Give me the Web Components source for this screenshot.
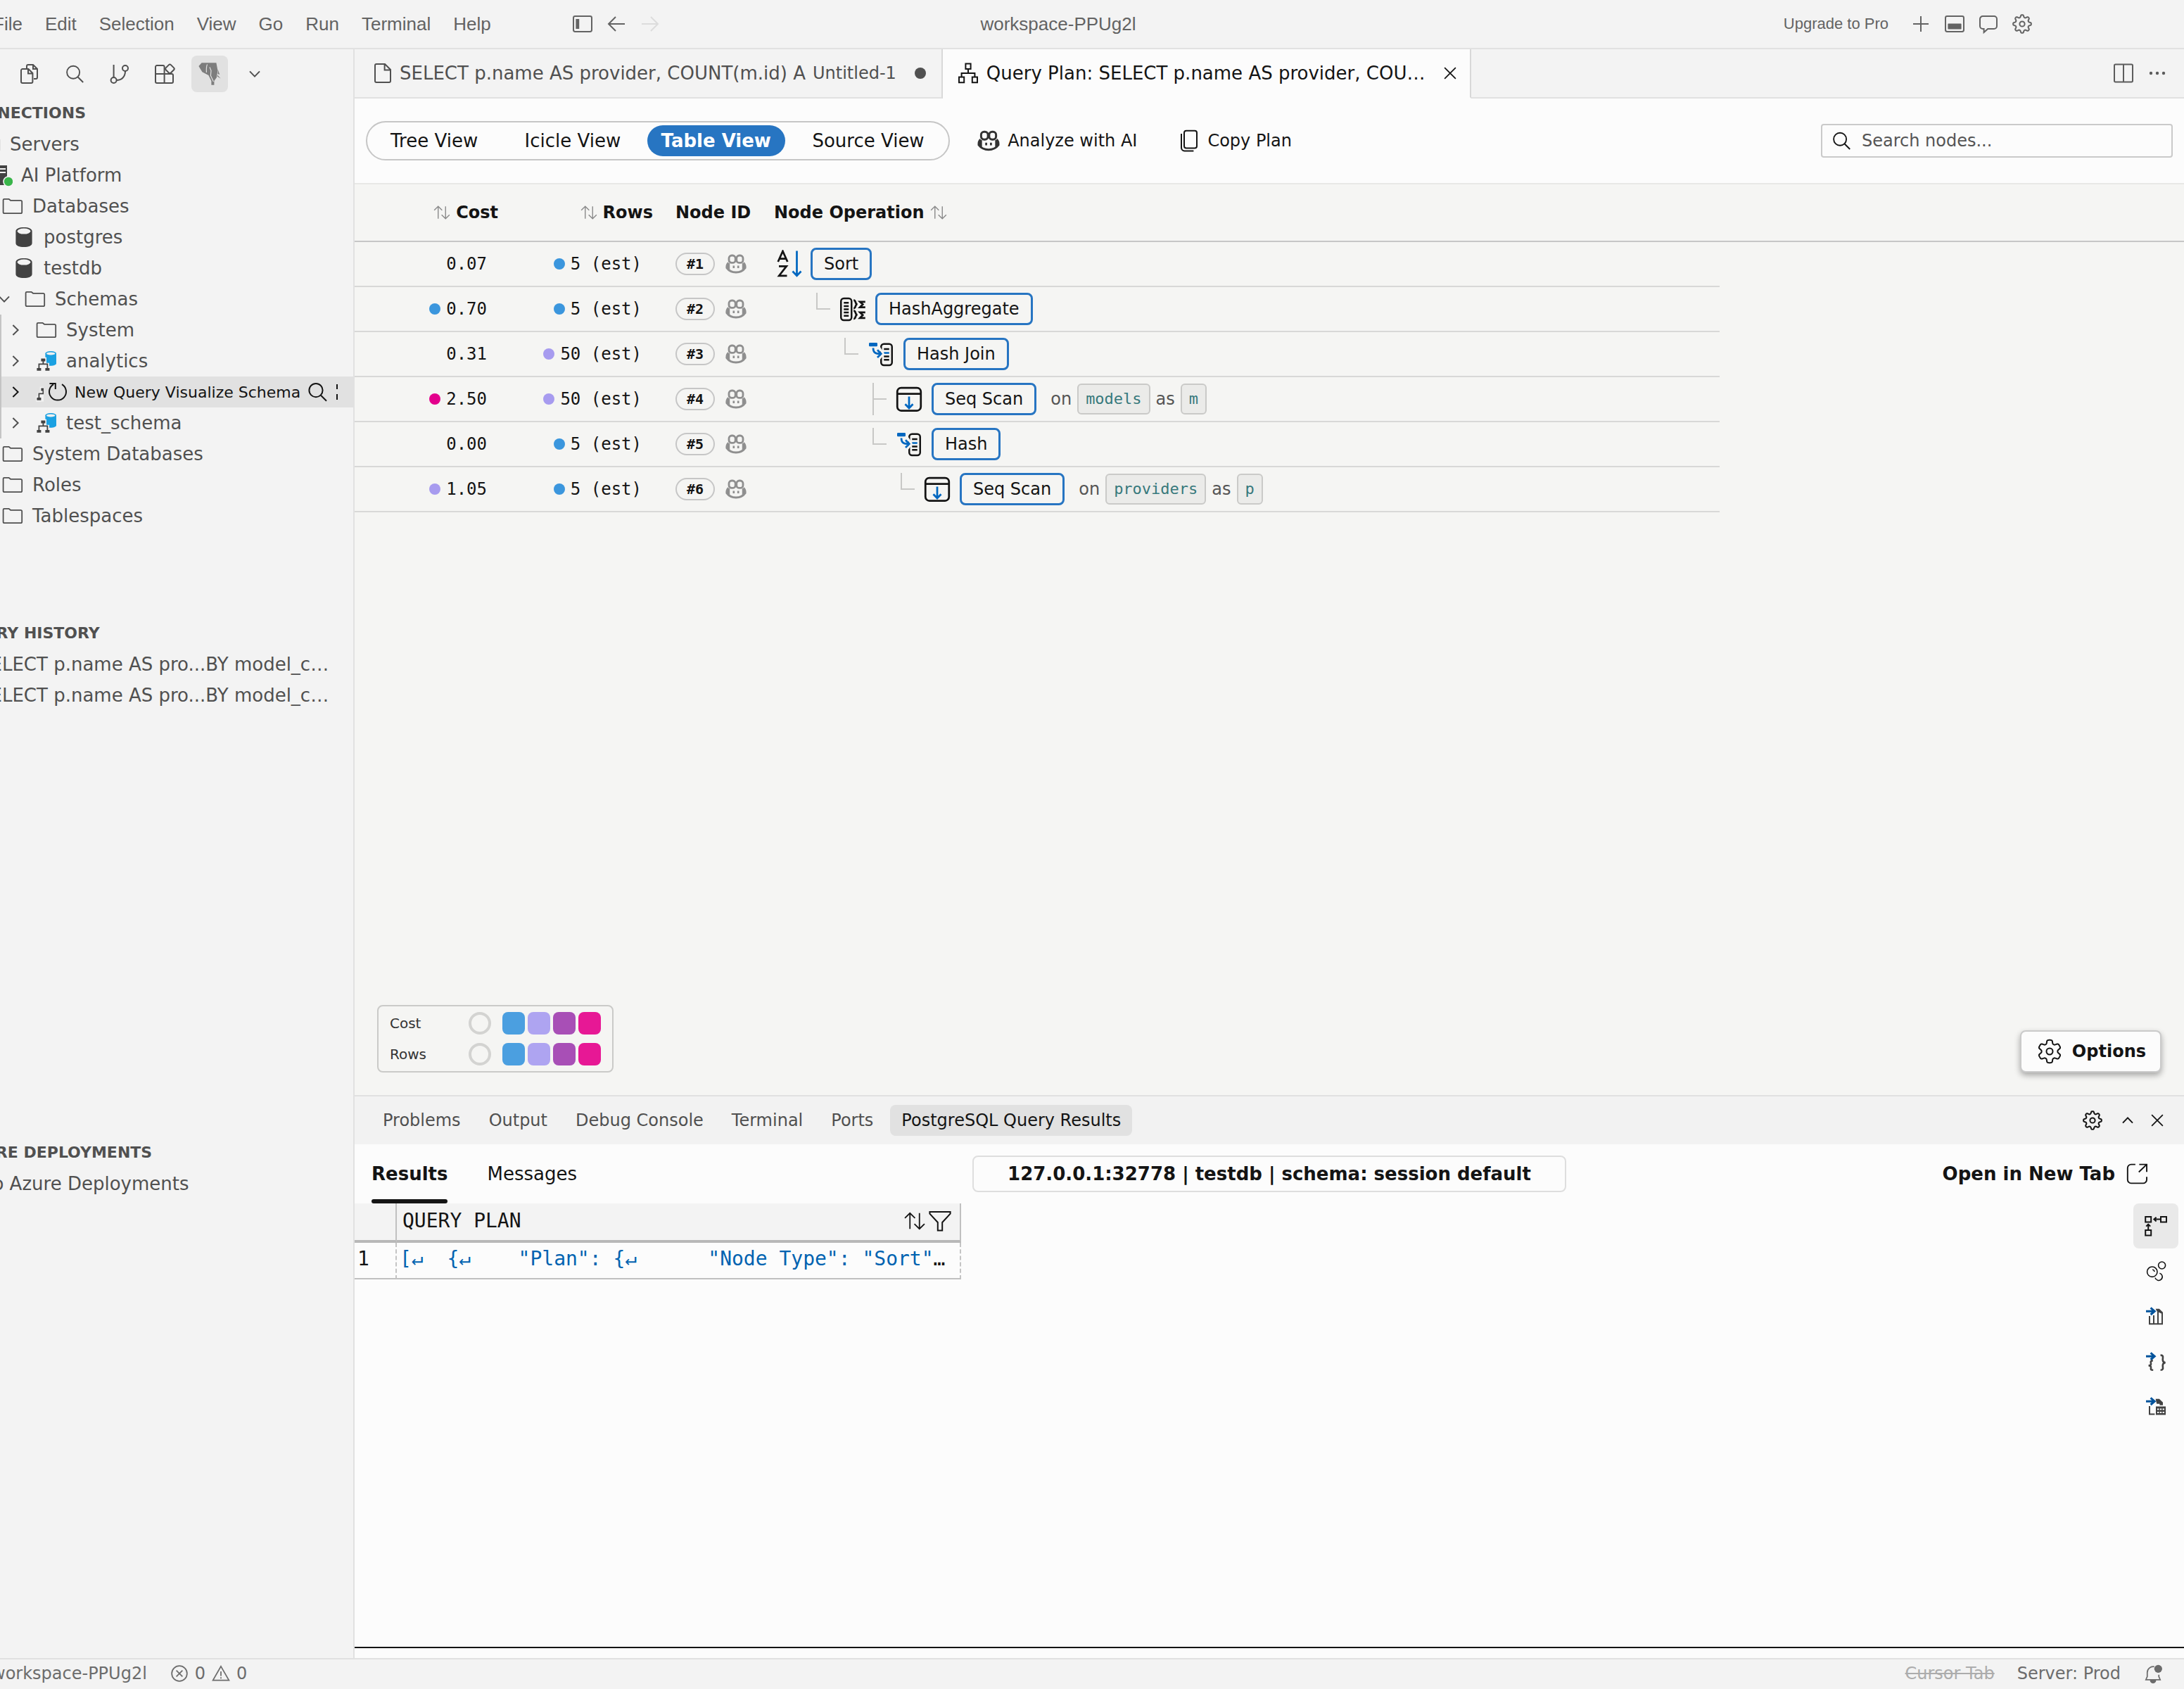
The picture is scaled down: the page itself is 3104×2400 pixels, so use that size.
<!DOCTYPE html>
<html lang="en">
<head>
<meta charset="utf-8">
<title>workspace-PPUg2l</title>
<style>
  :root {
    --text: #141414;
    --text-soft: #505050;
    --text-title: #636363;
    --chrome: #f3f3f3;
    --editor: #fcfcfc;
    --canvas: #f5f5f3;
    --line: #e1e1e1;
    --line-strong: #c6c6c6;
    --hover: #e1e1e1;
    --accent: #2775c2;
    --mono: "DejaVu Sans Mono", monospace;
  }
  body {
    margin: 0;
    font-family: "DejaVu Sans", sans-serif;
    font-size: 26px;
    color: var(--text);
    background: var(--chrome);
  }
</style>
</head>
<body>
<query-workbench></query-workbench>

<script>
/** Outline of a cog with n teeth, centred in the 16 unit icon grid. */
function gearPath(n, radius, depth, sharpness, bias) {
  const points = [];
  for (let i = 0; i < 120; i++) {
    const angle = (i / 120) * Math.PI * 2;
    const r = radius + depth * Math.tanh(sharpness * Math.cos(n * (angle - Math.PI / 2)) + bias);
    points.push((8 + r * Math.cos(angle)).toFixed(2) + ' ' + (8 + r * Math.sin(angle)).toFixed(2));
  }
  return 'M' + points.join('L') + 'Z';
}

const ARROW_IN = '<path d="M1 4.6h5.8M4.3 2.2 7.100 4.600 4.300 7" stroke="#00539c" stroke-width="1.5"/>';

// Every icon sits on a 16 x 16 grid and is stroked in the current colour.
const ICONS = {
  'layout-left': '<rect x="1.5" y="2.5" width="13" height="11" rx="1.2"/><path d="M4.4 4.5v7" stroke-width="2.4"/>',
  'arrow-left': '<path d="M14 8H2.5M7.5 3 2.5 8l5 5"/>',
  'arrow-right': '<path d="M2 8h11.5M8.5 3l5 5-5 5"/>',
  'add': '<path d="M8 2.5v11M2.5 8h11"/>',
  'layout-panel': '<rect x="1.5" y="2.5" width="13" height="11" rx="1.2"/><rect x="3.2" y="7.8" width="9.6" height="4" rx=".4" fill="currentColor" stroke="none"/>',
  'comment': '<path d="M4 2.5h8a2 2 0 0 1 2 2v5a2 2 0 0 1-2 2H7.600L4.800 14v-2.500H4a2 2 0 0 1-2-2v-5a2 2 0 0 1 2-2Z"/>',
  'gear': `<path d="${gearPath(8, 5.6, 0.9, 1.6, 0)}"/><circle cx="8" cy="8" r="1.8"/>`,
  'settings': `<path d="${gearPath(6, 6.1, 1.1, 2.2, 0.5)}" stroke-width=".9"/><circle cx="8" cy="8" r="2" stroke-width=".9"/>`,
  'files': '<path d="M6 4V2.500a1 1 0 0 1 1-1h3.500l3 3v6a1 1 0 0 1-1 1H11M10.500 1.500v3h3"/><path d="M3 4.500h4.200l3 3V13.500a1 1 0 0 1-1 1H3a1 1 0 0 1-1-1v-8a1 1 0 0 1 1-1ZM7 4.500v3.200h3.200"/>',
  'search': '<circle cx="7" cy="6.8" r="4.8"/><path d="m10.500 10.400 4 4"/>',
  'branch': '<circle cx="3.800" cy="12.500" r="2"/><circle cx="12" cy="4" r="2"/><path d="M3.800 10.500V1.500M12 6c0 4-2.500 6.500-6.200 6.500"/>',
  'extensions': '<path d="M7.800 8V3a1 1 0 0 0-1-1H2.500a1 1 0 0 0-1 1v10.500a1 1 0 0 0 1 1H13a1 1 0 0 0 1-1V9a1 1 0 0 0-1-1H1.500M7.800 8v6.500"/><rect x="9.200" y="1.900" width="5" height="5" rx="1" transform="rotate(45 11.700 4.400)"/>',
  'chevron-down': '<path d="M4.500 6.200 8 9.800l3.500-3.600"/>',
  'chevron-right': '<path d="M6.200 4.500 9.800 8l-3.600 3.500"/>',
  'chevron-up': '<path d="M4.500 9.800 8 6.200l3.500 3.600"/>',
  'close': '<path d="m3.500 3.500 9 9M12.500 3.500l-9 9"/>',
  'elephant': '<g stroke="none" fill="#7d7d7d"><path d="M2.300.1h10.400L13.700 5.500 13 10.500 11.200 13v2.900H9.200V13L7.200 9 2.700 6.600.2 2.500Z"/><path d="M13.900 5l1.200 3.500-1.300-.5ZM13.500 8.800l2.300 2.400-2.300-1.300Z"/></g><path d="M6.300 1.200C5.400 3 5.700 5 5.700 7M8 3.200l1 2.500-.3 3.500 2 4.300" stroke="#e1e1e1" stroke-width=".6"/>',
  'file': '<path d="M3.500 1.500h6l4 4v8a1 1 0 0 1-1 1h-9a1 1 0 0 1-1-1v-11a1 1 0 0 1 1-1ZM9.300 1.500v4.200h4.200"/>',
  'dot': '<circle cx="8" cy="8" r="4" fill="currentColor" stroke="none"/>',
  'plan': '<path d="M6.200 1.200h3.600v3.800H6.200ZM1.500 10.800h3.600v3.800H1.500ZM10.900 10.800h3.600v3.800h-3.600ZM8 5v3M3.300 10.800V8h9.400v2.800"/>',
  'split': '<rect x="1.500" y="1.800" width="13" height="12.400" rx=".8"/><path d="M8 2v12"/>',
  'more': '<g fill="currentColor" stroke="none"><circle cx="3.500" cy="8" r="1.100"/><circle cx="8" cy="8" r="1.100"/><circle cx="12.500" cy="8" r="1.100"/></g>',
  'folder': '<path d="M2 2.900h3.300l1.200 1h7.200a.9.900 0 0 1 .9.900v7.400a.9.900 0 0 1-.9.900H2.200a.9.900 0 0 1-.9-.9V3.600a.7.700 0 0 1 .7-.7Z" stroke-width=".9"/>',
  'server': '<path d="M3 1h9v14H3Z" fill="#424242" stroke="none"/><path d="M5 3.500h6M5 6h6" stroke="#f3f3f3"/><circle cx="13" cy="12.500" r="3.500" fill="#39b54a" stroke="#f3f3f3" stroke-width=".8"/>',
  'database': '<path d="M2.200 3.800C2.200 2 4.700 1 8 1s5.800 1 5.800 2.800v8.400C13.800 14 11.300 15 8 15s-5.800-1-5.800-2.800Z" fill="#424242" stroke="none"/><ellipse cx="8" cy="3.800" rx="4.700" ry="2" fill="#f3f3f3" stroke="none"/>',
  'schema': '<path d="M7.200 2.600C7.200 1.700 9 1 11.100 1s3.900.7 3.900 1.600v7.200c0 .9-1.800 1.600-3.900 1.600h-3.900Z" fill="#1ba1e2" stroke="none"/><ellipse cx="11.100" cy="2.700" rx="3.100" ry="1" fill="#f0f0f0" stroke="none"/><path d="M.5 12.200h1.200V9.400H3.400V5.400h4.600v4H10v2.800h1v3.500H.5Z" fill="#f3f3f3" stroke="none"/><g fill="#424242" stroke="none"><path d="M4.200 6.200h3v2H4.200ZM1.200 13h3v1.900h-3ZM7.200 13h3v1.900h-3Z"/></g><path d="M5.700 8v2M2.700 13v-2.800h6V13" stroke="#424242" stroke-width=".9"/>',
  'refresh': '<path d="M11 2.600a6 6 0 1 1-6 0M2.200 2h4.200v4"/>',
  'pipe-clip': '<path d="M8 2.500v3.500M8 9.500v4"/>',
  'copilot': '<rect x="3" y="2" width="4.600" height="5.200" rx="2" stroke-width="1.400"/><rect x="8.400" y="2" width="4.600" height="5.200" rx="2" stroke-width="1.400"/><path d="M2.700 7.200C1.600 8 1.300 9 1.400 10.800 3 13 5.500 14 8 14s5-1 6.600-3.200c.1-1.800-.2-2.800-1.300-3.600" stroke-width="1.400"/><path d="M2.300 7.500h1.300v4.600L1.200 11ZM13.700 7.500h-1.300v4.600l2.400-1.100Z" fill="currentColor" stroke="none"/><path d="M6.400 9.300v1.700M9.600 9.300v1.700" stroke-width="1.300"/>',
  'copy': '<rect x="4.500" y=".9" width="9" height="12.400" rx="1.500"/><path d="M2.500 3v10a2.200 2.200 0 0 0 2.200 2.200h6.500"/>',
  'sort': '<path d="M5 13V3M1.800 6.200 5 3l3.200 3.200M11 3v10M7.800 9.800 11 13l3.200-3.200" stroke-width=".8"/>',
  'filter': '<path d="M.7 1.500h14.600v1.300L9.600 9v5.800H6.400V9L.7 2.800Z"/>',
  'op-sort': '<path d="m2.300 6.800 2.700-6 2.700 6M3.200 5h3.600M2.800 9.300h4.300L2.900 14.700h4.500" stroke-width="1.100"/><path d="M13 .6v14M10.600 12.200l2.400 2.500 2.400-2.500" stroke="#0067c0" stroke-width="1.100"/>',
  'op-aggregate': '<rect x="1.300" y="2" width="6" height="12.400" rx="1.600"/><path d="M2.900 4.500h2.800M2.900 6.400h2.800M2.900 8.200h2.800M2.900 10h2.800M2.900 11.900h2.800"/><path d="M8.500 3c1.600 0 .5 2.100 2.100 2.300-1.600.2-.5 2.300-2.100 2.300M8.500 9c1.600 0 .5 2.100 2.100 2.300-1.600.2-.5 2.300-2.100 2.300M15.100 3.900h-3l1.600 1.500-1.600 1.600h3M15.100 9.900h-3l1.600 1.600-1.600 1.600h3" stroke-width="1.100"/>',
  'op-hash': '<rect x="8.100" y="2.300" width="6.200" height="12.100" rx="1.600"/><path d="M9.700 5.200h3M9.700 9.400h3M9.700 11.300h3"/><path d="M9.700 7.400h3" stroke="#0067c0"/><rect x="1.200" y="1.600" width="4.800" height="2.100" rx=".5" fill="#0067c0" stroke="none"/><path d="M7 4.200l2.200 3.600L7 11" stroke="#f5f5f3" stroke-width="1.200"/><path d="M3.600 4.600c0 2.400 1 3.300 4.200 3.300M6 5.700l2.100 2.200L6 10" stroke="#0067c0" stroke-width="1.100"/>',
  'op-scan': '<rect x="1.300" y="1.600" width="13.400" height="13" rx="2.200" stroke-width="1.100"/><path d="M1.300 5h13.400" stroke-width="1.100"/><path d="M8 6.600v6.600M5.800 10.900 8 13.200l2.200-2.300" stroke="#0067c0" stroke-width="1.100"/>',
  'open-new': '<path d="M7 1.700H4.200a2.400 2.400 0 0 0-2.400 2.400v7.800a2.400 2.400 0 0 0 2.400 2.400h8a2.400 2.400 0 0 0 2.400-2.400V10M9.600 1.700h5v5M14.600 1.700 9.300 6.800" stroke-width=".9"/>',
  'diagram': '<path d="M.6 1.500h4v3.700h-4ZM11.500 1.500h4v3.700h-4ZM.6 11h4v3.700h-4Z"/><path d="M11 3.300H6.600M8.300 1.900 6.700 3.300l1.600 1.400M2.600 10.500V7M1.100 8.300 2.600 6.800l1.500 1.500"/>',
  'bubbles': '<circle cx="5.400" cy="8.600" r="3.600" stroke-width=".8"/><circle cx="12.300" cy="4" r="2.500" stroke-width=".8"/><path d="M5.600 7a2 2 0 0 1 1.500 1.500M10.700 9.600a2.600 2.600 0 1 1-3.200 3.200" stroke-width=".8"/>',
  'export-csv': ARROW_IN + '<path d="M3.500 8v5.600h9V6M6.500 7.500v6M9.500 5v8.500" stroke="#424242"/><path d="M7.800 2.900h2.600l2.600 2.500v1.400L8.800 4.800Z" fill="#424242" stroke="none"/>',
  'export-json': ARROW_IN + '<path d="M5.900 7.700c-2.400 0-1.200 1.500-1.400 2.600-.1.700-.6.900-1.700.9 1.100 0 1.600.3 1.700 1 .2 1.200-.9 2.200 1.600 2.200M11.300 3.800c2.500 0 1.500 1.800 1.600 3.500.1 1.100.6 1.700 1.900 1.800-1.300.1-1.800.7-1.900 1.800-.1 1.700.9 3.500-1.600 3.500" stroke="#424242" stroke-width="1.300"/>',
  'export-xlsx': ARROW_IN + '<path d="M3.500 8v5.700h3.700" stroke="#424242"/><path d="M7.800 2.900h2.600l2.600 2.500v2h-2.300V6.400H8.600ZM8 8.200h7v6H8Z" fill="#424242" stroke="none"/><path d="M9 10.300h5M9 12.500h5" stroke="#fcfcfc" stroke-dasharray="1.200 .7"/>',
  'error': '<circle cx="8" cy="8" r="6.200"/><path d="m5.500 5.500 5 5M10.500 5.500l-5 5"/>',
  'warning': '<path d="M8 2.200 14.500 13.500h-13ZM8 6.300v3.700M8 11v1.200"/>',
  'bell': '<path d="M9 2.500a4.800 4.800 0 0 0-5.700 4.600v3.400L2.200 13h11.600l-1.100-2.500V9"/><circle cx="12.200" cy="4.200" r="3.200" fill="currentColor" stroke="none"/><path d="M6 13.500a2 2 0 0 0 4 0Z" fill="currentColor"/>',
};

/** Base class: renders the element's template into an open shadow root. */
class UiElement extends HTMLElement {
  connectedCallback() {
    if (!this.shadowRoot) {
      this.attachShadow({ mode: 'open' });
    }
    this.shadowRoot.innerHTML = this.template();
  }
}

class UiIcon extends UiElement {
  template() {
    const size = this.getAttribute('size') || 32;
    return `
      <style>
        :host { display: inline-flex; flex: none; }
        svg { display: block; }
      </style>
      <svg width="${size}" height="${size}" viewBox="0 0 16 16" fill="none" stroke="currentColor" aria-hidden="true">${ICONS[this.getAttribute('name')]}</svg>`;
  }
}
customElements.define('ui-icon', UiIcon);

/** Square button that only holds an icon. */
class IconButton extends UiElement {
  template() {
    const size = this.getAttribute('size') || 32;
    return `
      <style>
        :host { display: inline-flex; flex: none; }
        button {
          display: flex; align-items: center; justify-content: center;
          width: var(--box, 32px); height: var(--box, 32px);
          padding: 0; border: 0; border-radius: 8px;
          background: var(--button-background, transparent); color: inherit;
        }
      </style>
      <button aria-label="${this.getAttribute('label')}"><ui-icon name="${this.getAttribute('name')}" size="${size}"></ui-icon></button>`;
  }
}
customElements.define('icon-button', IconButton);

class TitleBar extends UiElement {
  template() {
    const menus = ['File', 'Edit', 'Selection', 'View', 'Go', 'Run', 'Terminal', 'Help'];
    return `
      <style>
        :host {
          display: grid; grid-template-columns: 1fr auto 1fr; align-items: center;
          height: 68px; padding-right: 96px; border-bottom: 2px solid var(--line);
          font-family: "Liberation Sans", sans-serif; color: var(--text-title);
        }
        nav, .history, .actions { display: flex; align-items: center; }
        nav { margin-left: -26px; }
        nav button { padding: 0 16px; border: 0; background: none; font: inherit; color: inherit; }
        .left { display: flex; align-items: center; gap: 98px; }
        .history { gap: 16px; }
        .disabled { color: #dcdcdc; }
        h1 { margin: 0; font-size: 26px; font-weight: 400; }
        .actions { justify-content: flex-end; gap: 16px; padding-right: 118px; }
        .actions a { margin-right: 14px; font-size: 22px; color: inherit; text-decoration: none; }
      </style>
      <div class="left">
        <nav>${menus.map(menu => `<button>${menu}</button>`).join('')}</nav>
        <div class="history">
          <icon-button name="layout-left" label="Toggle sidebar"></icon-button>
          <icon-button name="arrow-left" label="Back"></icon-button>
          <icon-button class="disabled" name="arrow-right" label="Forward"></icon-button>
        </div>
      </div>
      <h1>workspace-PPUg2l</h1>
      <div class="actions">
        <a href="#upgrade">Upgrade to Pro</a>
        <icon-button name="add" label="New"></icon-button>
        <icon-button name="layout-panel" label="Toggle panel"></icon-button>
        <icon-button name="comment" label="Chat"></icon-button>
        <icon-button name="gear" label="Settings"></icon-button>
      </div>`;
  }
}
customElements.define('title-bar', TitleBar);

class TreeItem extends UiElement {
  template() {
    const twist = this.getAttribute('twist');
    const icon = this.getAttribute('icon');
    const depth = Number(this.getAttribute('depth') || 0);
    return `
      <style>
        :host { display: flex; align-items: center; gap: 12px; height: 44px; padding-left: ${depth * 16}px; white-space: nowrap; }
        .twist { display: inline-flex; width: 32px; height: 32px; }
      </style>
      <span class="twist">${twist ? `<ui-icon name="chevron-${twist}"></ui-icon>` : ''}</span>
      ${icon ? `<ui-icon name="${icon}"></ui-icon>` : ''}
      <slot></slot>`;
  }
}
customElements.define('tree-item', TreeItem);

/** Schema row under the pointer: its label gives way to the inline actions. */
class TreeItemActions extends UiElement {
  template() {
    return `
      <style>
        :host { display: flex; align-items: center; height: 44px; padding-left: 4px; background: var(--hover); color: var(--text); font-size: 22px; white-space: nowrap; }
        .clip { width: 12px; margin-left: 12px; overflow: hidden; }
        .actions { display: flex; align-items: center; margin-left: 4px; }
        a { color: inherit; text-decoration: none; }
        .links { display: flex; gap: 7px; margin: 0 8px; }
        .overflow { display: flex; justify-content: center; width: 24px; overflow: hidden; }
      </style>
      <ui-icon name="chevron-right"></ui-icon>
      <span class="clip"><ui-icon name="schema"></ui-icon></span>
      <span class="actions">
        <icon-button name="refresh" label="Refresh"></icon-button>
        <span class="links"><a href="#query">New Query</a><a href="#visualize">Visualize Schema</a></span>
        <icon-button name="search" label="Search"></icon-button>
        <span class="overflow"><ui-icon name="pipe-clip"></ui-icon></span>
      </span>`;
  }
}
customElements.define('tree-item-actions', TreeItemActions);

class SideBar extends UiElement {
  template() {
    return `
      <style>
        :host { display: flex; flex-direction: column; min-width: 0; overflow: hidden; border-right: 2px solid var(--line); color: var(--text-soft); }
        .views { display: flex; align-items: center; gap: 12px; height: 70px; padding-left: 16px; --box: 52px; }
        .active { --button-background: var(--hover); }
        section { flex: 1 1 0; min-height: 0; }
        h2 { margin: 0 0 1px -57px; font-size: 22px; line-height: 42px; white-space: nowrap; }
        .tree { margin-left: -74px; }
        .children { margin-left: 74px; border-left: 2px solid #c4c4c4; }
        .children tree-item { margin-left: 4px; }
      </style>
      <div class="views">
        <icon-button name="files" label="Explorer"></icon-button>
        <icon-button name="search" size="30" label="Search"></icon-button>
        <icon-button name="branch" label="Source control"></icon-button>
        <icon-button name="extensions" label="Extensions"></icon-button>
        <icon-button class="active" name="elephant" label="PostgreSQL"></icon-button>
        <icon-button name="chevron-down" label="More views"></icon-button>
      </div>
      <section>
        <h2>CONNECTIONS</h2>
        <div class="tree">
          <tree-item depth="0" icon="folder">Servers</tree-item>
          <tree-item depth="1" icon="server">AI Platform</tree-item>
          <tree-item depth="2" icon="folder">Databases</tree-item>
          <tree-item depth="3" icon="database">postgres</tree-item>
          <tree-item depth="3" icon="database">testdb</tree-item>
          <tree-item depth="4" icon="folder" twist="down">Schemas</tree-item>
          <div class="children">
            <tree-item icon="folder" twist="right">System</tree-item>
            <tree-item icon="schema" twist="right">analytics</tree-item>
            <tree-item-actions></tree-item-actions>
            <tree-item icon="schema" twist="right">test_schema</tree-item>
          </div>
          <tree-item depth="2" icon="folder">System Databases</tree-item>
          <tree-item depth="2" icon="folder">Roles</tree-item>
          <tree-item depth="2" icon="folder">Tablespaces</tree-item>
        </div>
      </section>
      <section>
        <h2>QUERY HISTORY</h2>
        <div class="tree">
          <tree-item>SELECT p.name AS pro...BY model_c…</tree-item>
          <tree-item>SELECT p.name AS pro...BY model_c…</tree-item>
        </div>
      </section>
      <section>
        <h2>AZURE DEPLOYMENTS</h2>
        <div class="tree"><tree-item>No Azure Deployments</tree-item></div>
      </section>`;
  }
}
customElements.define('side-bar', SideBar);

class EditorTabs extends UiElement {
  template() {
    return `
      <style>
        :host { display: flex; height: 70px; white-space: nowrap; }
        .tab { display: flex; align-items: center; padding: 0 14px 0 24px; border-right: 2px solid #d8d8d8; color: var(--text-soft); }
        .tab, .rest { border-bottom: 2px solid var(--line); box-sizing: border-box; }
        .tab button { padding: 0; border: 0; background: none; font: inherit; color: inherit; }
        .tab ui-icon { margin-right: 8px; }
        .tab small { margin: 0 18px 0 10px; font-size: 24px; }
        .active { padding: 0 12px 0 20px; border-bottom-color: var(--editor); background: var(--editor); color: var(--text); }
        .active ui-icon { margin-right: 10px; }
        .active button { margin-right: 20px; }
        .rest { display: flex; flex: 1; align-items: center; justify-content: flex-end; gap: 16px; padding-right: 22px; color: #5c5c5c; }
      </style>
      <div class="tab">
        <ui-icon name="file"></ui-icon>
        <button>SELECT p.name AS provider, COUNT(m.id) A</button>
        <small>Untitled-1</small>
        <icon-button name="dot" label="Unsaved changes"></icon-button>
      </div>
      <div class="tab active">
        <ui-icon name="plan"></ui-icon>
        <button>Query Plan: SELECT p.name AS provider, COU…</button>
        <icon-button name="close" size="28" label="Close"></icon-button>
      </div>
      <div class="rest">
        <icon-button name="split" label="Split editor"></icon-button>
        <icon-button name="more" label="More actions"></icon-button>
      </div>`;
  }
}
customElements.define('editor-tabs', EditorTabs);

class PlanToolbar extends UiElement {
  template() {
    const views = ['Tree View', 'Icicle View', 'Table View', 'Source View'];
    return `
      <style>
        :host { display: flex; align-items: center; height: 120px; padding: 0 16px; border-bottom: 2px solid #e8e8e6; background: var(--editor); font-size: 24px; }
        .switch { display: flex; gap: 8px; padding: 4px; border: 2px solid var(--line-strong); border-radius: 28px; }
        .switch button { display: grid; height: 44px; align-content: center; justify-items: center; padding: 0 20px; border: 0; border-radius: 22px; background: none; color: var(--text); font: 26px/44px "DejaVu Sans", sans-serif; }
        /* keeps room for the bold label so that the switch never changes width */
        .switch button::after { content: attr(title); height: 0; font-weight: 700; visibility: hidden; overflow: hidden; }
        .switch .on { background: var(--accent); color: #fff; font-weight: 700; }
        .command { display: flex; align-items: center; gap: 10px; padding: 0; border: 0; background: none; color: var(--text); font: inherit; }
        .ai { margin: 0 58px 0 38px; }
        .ai ui-icon { color: #333; }
        label { display: flex; align-items: center; gap: 14px; box-sizing: border-box; width: 500px; height: 48px; margin-left: auto; padding: 0 12px; border: 2px solid #cacaca; border-radius: 4px; }
        input { flex: 1; min-width: 0; padding: 0; border: 0; outline: 0; background: none; font: inherit; }
        input::placeholder { color: #555; opacity: 1; }
      </style>
      <div class="switch">
        ${views.map(view => `<button title="${view}"${view === 'Table View' ? ' class="on"' : ''}>${view}</button>`).join('')}
      </div>
      <button class="command ai"><ui-icon name="copilot" size="34"></ui-icon>Analyze with AI</button>
      <button class="command"><ui-icon name="copy"></ui-icon>Copy Plan</button>
      <label><ui-icon name="search" size="30"></ui-icon><input type="text" placeholder="Search nodes..." aria-label="Search nodes"></label>`;
  }
}
customElements.define('plan-toolbar', PlanToolbar);

const PLAN = [
  { cost: '0.07', rows: '5', rowsDot: 'blue', op: 'Sort', icon: 'op-sort', depth: 0 },
  { cost: '0.70', costDot: 'blue', rows: '5', rowsDot: 'blue', op: 'HashAggregate', icon: 'op-aggregate', depth: 1 },
  { cost: '0.31', rows: '50', rowsDot: 'lilac', op: 'Hash Join', icon: 'op-hash', depth: 2 },
  { cost: '2.50', costDot: 'pink', rows: '50', rowsDot: 'lilac', op: 'Seq Scan', icon: 'op-scan', depth: 3, more: true, table: 'models', alias: 'm' },
  { cost: '0.00', rows: '5', rowsDot: 'blue', op: 'Hash', icon: 'op-hash', depth: 3 },
  { cost: '1.05', costDot: 'lilac', rows: '5', rowsDot: 'blue', op: 'Seq Scan', icon: 'op-scan', depth: 4, table: 'providers', alias: 'p' },
];

class PlanTable extends UiElement {
  dot(color) {
    return color ? `<i class="dot ${color}"></i>` : '';
  }

  branch(node) {
    if (node.depth === 0) {
      return '';
    }
    return `<span class="branch${node.more ? ' more' : ''}" style="margin-left: ${20 + node.depth * 40}px"></span>`;
  }

  row(node, index) {
    const target = node.table
      ? `<span class="target">on <code>${node.table}</code> as <code>${node.alias}</code></span>`
      : '';
    return `
      <tr>
        <td class="number"><div>${this.dot(node.costDot)}${node.cost}</div></td>
        <td class="number"><div>${this.dot(node.rowsDot)}${node.rows} (est)</div></td>
        <td><div class="id"><b>#${index + 1}</b><icon-button name="copilot" label="Analyze node ${index + 1} with AI"></icon-button></div></td>
        <td><div class="operation">${this.branch(node)}<ui-icon name="${node.icon}" size="40"></ui-icon><button>${node.op}</button>${target}</div></td>
      </tr>`;
  }

  template() {
    const sort = '<ui-icon name="sort" size="28"></ui-icon>';
    return `
      <style>
        :host { display: block; font-size: 24px; }
        table { width: 100%; border-collapse: separate; border-spacing: 0; table-layout: fixed; }
        th, td { box-sizing: border-box; padding: 0 16px; text-align: left; white-space: nowrap; }
        th { height: 82px; border-bottom: 2px solid var(--line-strong); }
        td { height: 64px; border-bottom: 2px solid #d8d8d7; }
        th div, td div { display: flex; align-items: center; gap: 8px; }
        th div { gap: 6px; }
        th.number div, td.number div { justify-content: flex-end; }
        th ui-icon { color: #8a8a8a; }
        td.number { padding-right: 32px; font-family: var(--mono); }
        .cost, .rows { width: 220px; }
        .node { width: 140px; }
        .spare { width: 660px; }
        .dot { width: 16px; height: 16px; border-radius: 50%; }
        .blue { background: #3b96dd; }
        .lilac { background: #a79bef; }
        .pink { background: #e3008c; }
        td .id { gap: 14px; color: #8f8f8f; }
        b { box-sizing: border-box; width: 56px; height: 32px; border: 2px solid var(--line-strong); border-radius: 16px; color: var(--text); font: 700 20px/28px var(--mono); text-align: center; }
        td .operation { gap: 12px; }
        .branch { align-self: flex-start; box-sizing: border-box; width: 20px; height: 24px; border: solid #c8c8c6; border-width: 0 0 2px 2px; }
        .more { position: relative; height: 46px; border-bottom: 0; }
        .more::after { content: ""; position: absolute; top: 22px; left: 0; width: 18px; height: 2px; background: #c8c8c6; }
        button { height: 46px; padding: 0 16px; border: 3px solid var(--accent); border-radius: 8px; background: none; color: var(--text); font: inherit; }
        .target { display: flex; align-items: center; gap: 8px; margin-left: 8px; color: #555; }
        code { padding: 0 10px; border: 2px solid #cacac8; border-radius: 6px; background: #ebebe9; color: #37797c; font: 22px/40px var(--mono); }
      </style>
      <table>
        <colgroup><col class="cost"><col class="rows"><col class="node"><col><col class="spare"></colgroup>
        <thead>
          <tr>
            <th class="number"><div>${sort}Cost</div></th>
            <th class="number"><div>${sort}Rows</div></th>
            <th>Node ID</th>
            <th colspan="2"><div>Node Operation${sort}</div></th>
          </tr>
        </thead>
        <tbody>${PLAN.map((node, index) => this.row(node, index)).join('')}</tbody>
      </table>`;
  }
}
customElements.define('plan-table', PlanTable);

class HeatLegend extends UiElement {
  template() {
    const swatches = '<i class="none"></i><i class="low"></i><i class="mid"></i><i class="high"></i><i class="top"></i>';
    return `
      <style>
        :host { display: grid; gap: 12px; padding: 8px 16px; border: 2px solid #cacac8; border-radius: 8px; font-size: 20px; color: #333; }
        div { display: flex; align-items: center; gap: 4px; }
        span { width: 108px; }
        i { box-sizing: border-box; width: 32px; height: 32px; border-radius: 8px; }
        .none { margin-right: 12px; border: 4px solid #d3d3d1; border-radius: 50%; }
        .low { background: #4b9fe0; }
        .mid { background: #aea4f1; }
        .high { background: #a84fb6; }
        .top { background: #e71895; }
      </style>
      <div><span>Cost</span>${swatches}</div>
      <div><span>Rows</span>${swatches}</div>`;
  }
}
customElements.define('heat-legend', HeatLegend);

class PlanEditor extends UiElement {
  template() {
    return `
      <style>
        :host { display: flex; flex-direction: column; min-height: 0; background: var(--canvas); }
        editor-tabs { background: var(--chrome); }
        footer { display: flex; align-items: flex-end; justify-content: space-between; margin-top: auto; padding: 32px; }
        button { display: flex; align-items: center; gap: 14px; height: 60px; padding: 0 20px 0 22px; border: 2px solid #cacaca; border-radius: 8px; background: var(--editor); color: var(--text); font: 700 24px "DejaVu Sans", sans-serif; box-shadow: 0 4px 8px rgba(0, 0, 0, .32); }
      </style>
      <editor-tabs></editor-tabs>
      <plan-toolbar></plan-toolbar>
      <plan-table></plan-table>
      <footer>
        <heat-legend></heat-legend>
        <button><ui-icon name="settings" size="36"></ui-icon>Options</button>
      </footer>`;
  }
}
customElements.define('plan-editor', PlanEditor);

class PanelTabs extends UiElement {
  template() {
    const tabs = ['Problems', 'Output', 'Debug Console', 'Terminal', 'Ports', 'PostgreSQL Query Results'];
    return `
      <style>
        :host { display: flex; align-items: center; justify-content: space-between; height: 68px; padding: 0 22px 0 24px; background: #f2f2f2; font-size: 24px; }
        nav, .actions { display: flex; align-items: center; gap: 8px; }
        .actions { gap: 10px; }
        .settings { margin-right: 8px; }
        nav button { height: 44px; padding: 0 16px; border: 0; border-radius: 8px; background: none; color: var(--text-soft); font: inherit; }
        nav .on { background: var(--hover); color: var(--text); }
      </style>
      <nav>${tabs.map((tab, index) => `<button${index === 5 ? ' class="on"' : ''}>${tab}</button>`).join('')}</nav>
      <div class="actions">
        <icon-button class="settings" name="gear" label="Panel settings"></icon-button>
        <icon-button name="chevron-up" label="Maximize panel"></icon-button>
        <icon-button name="close" size="28" label="Close panel"></icon-button>
      </div>`;
  }
}
customElements.define('panel-tabs', PanelTabs);

class ResultGrid extends UiElement {
  template() {
    return `
      <style>
        :host { display: block; }
        table { border-collapse: separate; border-spacing: 0; font: 28px/32px var(--mono); }
        th, td { box-sizing: border-box; height: 56px; padding: 0 8px 2px; text-align: left; font-weight: 400; white-space: pre; border-right: 2px solid #c0c0c0; }
        th { border-bottom: 4px solid #b8b8b8; background: var(--chrome); }
        th div { display: flex; align-items: center; justify-content: space-between; }
        th span { display: flex; gap: 4px; margin-right: 4px; }
        td { height: 52px; padding: 0 4px 4px; border-right: 2px dashed #c4c4c4; border-bottom: 2px solid #c0c0c0; }
        .index { width: 60px; }
        .json { width: 802px; }
        a { color: #0063b1; text-decoration: none; }
      </style>
      <table>
        <thead>
          <tr><th class="index"></th><th class="json"><div>QUERY PLAN<span><icon-button name="sort" size="36" label="Sort column"></icon-button><icon-button name="filter" label="Filter column"></icon-button></span></div></th></tr>
        </thead>
        <tbody>
          <tr><td class="index">1</td><td><a href="#plan">[↵  {↵    "Plan": {↵      "Node Type": "Sort"</a>…</td></tr>
        </tbody>
      </table>`;
  }
}
customElements.define('result-grid', ResultGrid);

class ResultPanel extends UiElement {
  template() {
    return `
      <style>
        :host { display: flex; flex-direction: column; min-height: 0; box-sizing: border-box; border-top: 2px solid var(--line); background: var(--editor); }
        header { display: grid; grid-template-columns: 1fr auto 1fr; align-items: center; height: 84px; padding: 0 24px; }
        .tabs { display: flex; gap: 56px; }
        .tabs button { height: 84px; padding: 0; border: 0; background: none; color: var(--text); font: inherit; }
        .tabs .on { position: relative; font-weight: 700; }
        .tabs .on::after { content: ""; position: absolute; right: 0; bottom: 0; left: 0; height: 6px; border-radius: 3px; background: var(--text); }
        .target { height: 52px; padding: 0 48px; border: 2px solid #dedede; border-radius: 8px; background: none; color: var(--text); font: 700 26px "DejaVu Sans", sans-serif; }
        .open { display: flex; align-items: center; justify-self: end; gap: 14px; margin-right: 26px; color: var(--text); font-weight: 700; text-decoration: none; }
        .body { display: flex; flex: 1; align-items: flex-start; justify-content: space-between; margin-bottom: 14px; padding-right: 8px; border-bottom: 2px solid var(--text); }
        aside { display: flex; flex-direction: column; --box: 64px; }
        .active { --button-background: #e9e9e9; }
      </style>
      <panel-tabs></panel-tabs>
      <header>
        <div class="tabs"><button class="on">Results</button><button>Messages</button></div>
        <button class="target">127.0.0.1:32778 | testdb | schema: session default</button>
        <a class="open" href="#tab">Open in New Tab<ui-icon name="open-new" size="34"></ui-icon></a>
      </header>
      <div class="body">
        <result-grid></result-grid>
        <aside>
          <icon-button class="active" name="diagram" label="Query plan"></icon-button>
          <icon-button name="bubbles" label="Visualize"></icon-button>
          <icon-button name="export-csv" label="Save as CSV"></icon-button>
          <icon-button name="export-json" label="Save as JSON"></icon-button>
          <icon-button name="export-xlsx" label="Save as Excel"></icon-button>
        </aside>
      </div>`;
  }
}
customElements.define('result-panel', ResultPanel);

class StatusBar extends UiElement {
  template() {
    return `
      <style>
        :host { display: flex; align-items: center; height: 40px; padding: 0 28px 2px 0; border-top: 2px solid var(--line); color: #6c6c6c; font-size: 24px; white-space: nowrap; }
        div { display: flex; align-items: center; gap: 8px; }
        .problems { margin: 0 auto 0 32px; }
        .name { margin-left: -12px; }
        s { margin-right: 32px; color: #acacac; }
        .server { margin-right: 30px; }
      </style>
      <div class="name">workspace-PPUg2l</div>
      <div class="problems"><ui-icon name="error" size="28"></ui-icon>0<ui-icon name="warning" size="28"></ui-icon>0</div>
      <s>Cursor Tab</s>
      <span class="server">Server: Prod</span>
      <icon-button name="bell" size="28" label="Notifications"></icon-button>`;
  }
}
customElements.define('status-bar', StatusBar);

class QueryWorkbench extends UiElement {
  template() {
    return `
      <style>
        :host { display: flex; flex-direction: column; height: 100vh; overflow: hidden; }
        main { display: grid; grid-template-columns: 504px minmax(0, 1fr); grid-template-rows: minmax(0, 65fr) minmax(0, 35fr); flex: 1; min-height: 0; }
        side-bar { grid-row: 1 / 3; }
      </style>
      <title-bar></title-bar>
      <main>
        <side-bar></side-bar>
        <plan-editor></plan-editor>
        <result-panel></result-panel>
      </main>
      <status-bar></status-bar>`;
  }
}
customElements.define('query-workbench', QueryWorkbench);
</script>
</body>
</html>
